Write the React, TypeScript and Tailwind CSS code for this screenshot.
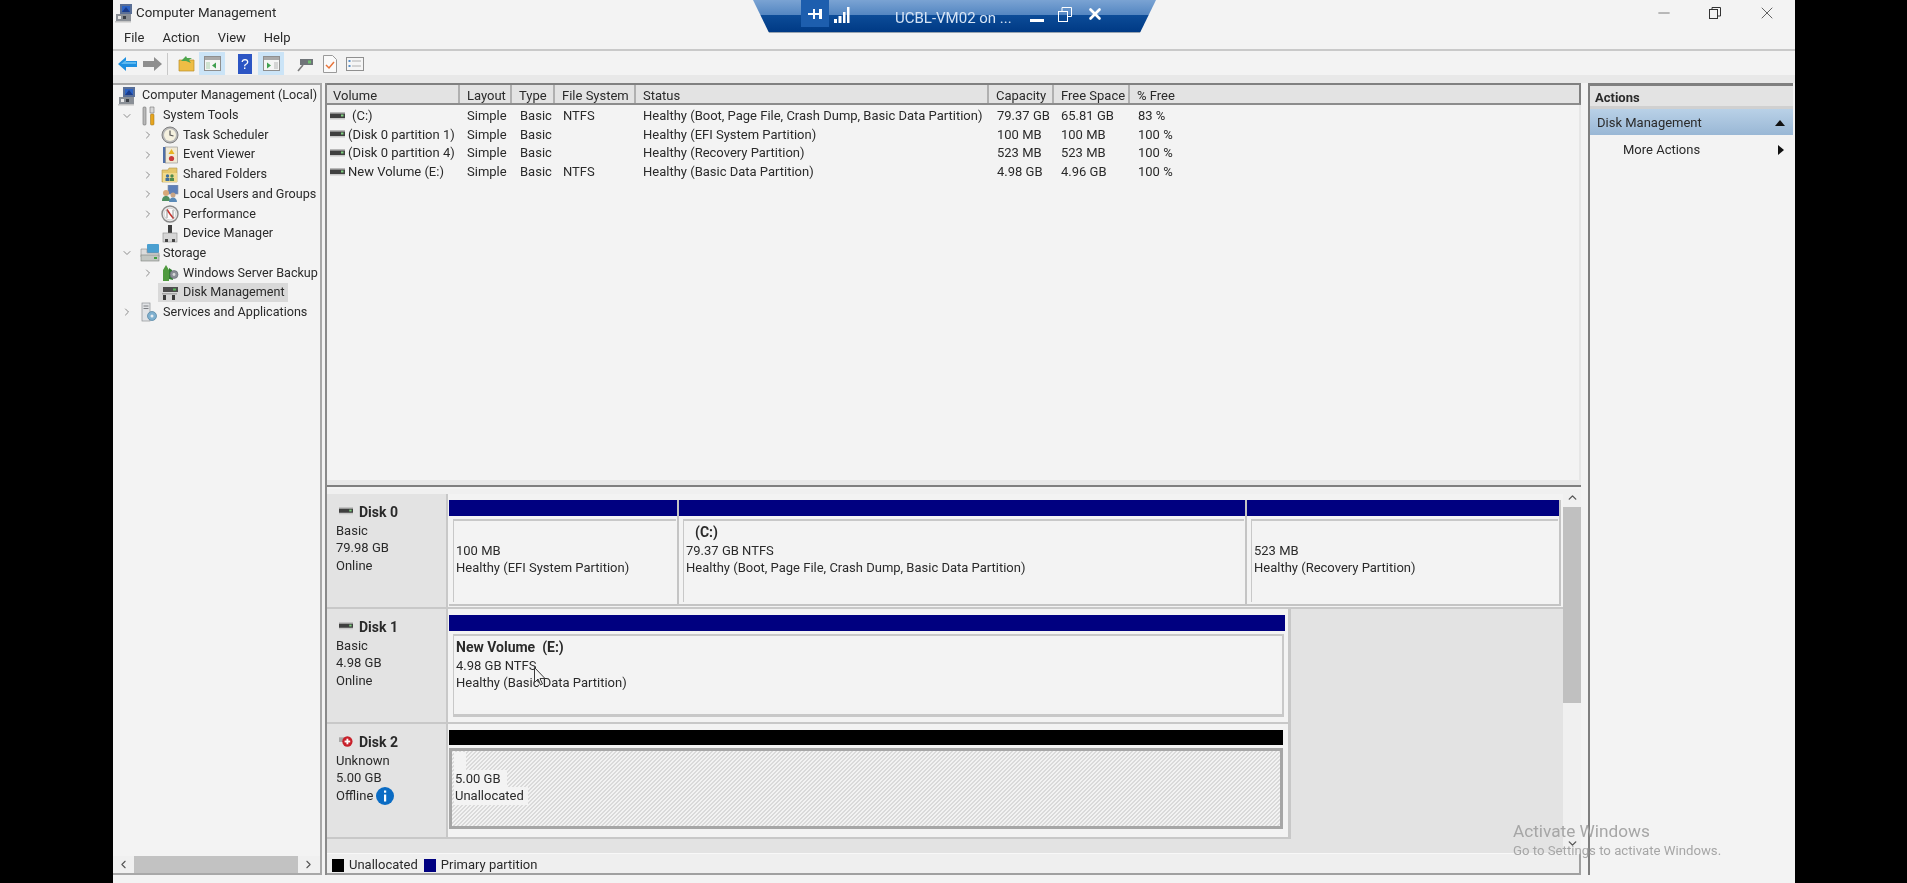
import { ChevronDown, ChevronRight, ChevronLeft, ChevronUp, Minus, X } from 'lucide-react';
import type { ReactNode } from 'react';

const columnGrid = 'grid grid-cols-[133px_52px_43px_81px_353px_65px_76px_1fr]';

const columns = ['Volume', 'Layout', 'Type', 'File System', 'Status', 'Capacity', 'Free Space', '% Free'];

const volumes = [
  { name: '(C:)', indent: true, fs: 'NTFS', status: 'Healthy (Boot, Page File, Crash Dump, Basic Data Partition)', cap: '79.37 GB', free: '65.81 GB', pct: '83 %' },
  { name: '(Disk 0 partition 1)', fs: '', status: 'Healthy (EFI System Partition)', cap: '100 MB', free: '100 MB', pct: '100 %' },
  { name: '(Disk 0 partition 4)', fs: '', status: 'Healthy (Recovery Partition)', cap: '523 MB', free: '523 MB', pct: '100 %' },
  { name: 'New Volume (E:)', fs: 'NTFS', status: 'Healthy (Basic Data Partition)', cap: '4.98 GB', free: '4.96 GB', pct: '100 %' },
];

function PcIcon() {
  return (
    <svg viewBox="0 0 18 20" className="w-[18px] h-[20px] shrink-0">
      <rect x="5" y="1" width="12" height="10" fill="#5a6f96" />
      <rect x="7" y="3" width="8" height="6" fill="#2b62c4" />
      <path d="M7 9l4-5 4 5z" fill="#1a3c8c" />
      <rect x="1" y="11" width="15" height="7" fill="#8a8f96" />
      <rect x="3" y="13" width="3" height="3" fill="#e8e8e8" />
      <rect x="8" y="13" width="3" height="3" fill="#3a3f46" />
      <rect x="0" y="18" width="16" height="1.5" fill="#c4c4c4" />
    </svg>
  );
}

function ToolsIcon() {
  return (
    <svg viewBox="0 0 18 20" className="w-[18px] h-[20px] shrink-0">
      <rect x="3" y="1" width="3" height="18" rx="1" fill="#b9b9b9" stroke="#6f6f6f" strokeWidth="0.6" />
      <path d="M10 1h4v6h-4z" fill="#d8d8d8" stroke="#777" strokeWidth="0.6" />
      <rect x="10.5" y="8" width="3.5" height="11" rx="1" fill="#e6a51f" stroke="#9a6c10" strokeWidth="0.5" />
    </svg>
  );
}

function ClockIcon() {
  return (
    <svg viewBox="0 0 18 18" className="w-[18px] h-[18px] shrink-0">
      <circle cx="9" cy="9" r="8" fill="#b8b8b8" stroke="#808080" />
      <circle cx="9" cy="9" r="6" fill="#f5f1df" />
      <path d="M9 4.5V9l3.5 1" stroke="#5a5a5a" strokeWidth="1.2" fill="none" />
    </svg>
  );
}

function ViewerIcon() {
  return (
    <svg viewBox="0 0 18 18" className="w-[18px] h-[18px] shrink-0">
      <rect x="2" y="1" width="3" height="16" fill="#4f6fa8" />
      <rect x="4.5" y="1" width="12" height="16" fill="#f0e9d4" stroke="#8a8a8a" strokeWidth="0.6" />
      <path d="M10.5 3l3 5h-6z" fill="#e7b321" />
      <circle cx="10.5" cy="12.5" r="2.6" fill="#c83a3a" />
    </svg>
  );
}

function FolderUsersIcon() {
  return (
    <svg viewBox="0 0 18 18" className="w-[18px] h-[18px] shrink-0">
      <path d="M1 4h6l1-2h8v14H1z" fill="#e4c66a" stroke="#b2954a" strokeWidth="0.6" />
      <rect x="2" y="7" width="14" height="9" fill="#f0da8e" />
      <circle cx="6.5" cy="10" r="1.7" fill="#3f6e9a" />
      <circle cx="11" cy="10" r="1.7" fill="#4f8a4f" />
      <rect x="4.5" y="12" width="4" height="3" fill="#3f6e9a" />
      <rect x="9" y="12" width="4" height="3" fill="#4f8a4f" />
    </svg>
  );
}

function UsersIcon() {
  return (
    <svg viewBox="0 0 18 18" className="w-[18px] h-[18px] shrink-0">
      <rect x="7" y="0" width="10" height="9" fill="#5d7fb8" stroke="#8c94a3" strokeWidth="0.6" />
      <circle cx="5" cy="8" r="3" fill="#d8a878" />
      <path d="M1 16c0-4 2-5 4-5s4 1 4 5z" fill="#4f8f5f" />
      <circle cx="12" cy="10" r="2.5" fill="#c9a585" />
      <path d="M8 17c0-3 2-4.500 4-4.500s4 1.500 4 4.500z" fill="#5a8ab8" />
    </svg>
  );
}

function PerfIcon() {
  return (
    <svg viewBox="0 0 18 18" className="w-[18px] h-[18px] shrink-0">
      <circle cx="9" cy="9" r="8" fill="#e8e8e8" stroke="#8a8a8a" strokeWidth="1.4" />
      <circle cx="9" cy="9" r="5.800" fill="#fbfbfb" stroke="#bdbdbd" strokeWidth="0.5" />
      <path d="M6 4.500L9 9l3.500 4.500" stroke="#c8322d" strokeWidth="1.6" fill="none" />
      <path d="M6 13V5M12 13V5" stroke="#7a7a7a" strokeWidth="0.8" />
    </svg>
  );
}

function DeviceIcon() {
  return (
    <svg viewBox="0 0 18 18" className="w-[18px] h-[18px] shrink-0">
      <rect x="7" y="0" width="4" height="8" fill="#3e3e3e" />
      <rect x="2" y="8" width="14" height="9" fill="#d6d6d6" stroke="#8a8a8a" strokeWidth="0.6" />
      <rect x="4" y="14" width="3" height="3" fill="#444" />
      <rect x="11" y="14" width="3" height="3" fill="#444" />
    </svg>
  );
}

function StorageIcon() {
  return (
    <svg viewBox="0 0 20 20" className="w-[20px] h-[20px] shrink-0">
      <rect x="7" y="1" width="12" height="9" rx="1" fill="#4a9fd0" />
      <path d="M1 6h6v4h12v4H1z" fill="#dcdcdc" stroke="#8a8a8a" strokeWidth="0.6" />
      <rect x="1" y="12" width="18" height="6" fill="#c2c6c2" stroke="#7c807c" strokeWidth="0.6" />
      <rect x="14" y="14" width="3" height="2" fill="#3f9f3f" />
    </svg>
  );
}

function BackupIcon() {
  return (
    <svg viewBox="0 0 18 18" className="w-[18px] h-[18px] shrink-0">
      <path d="M2 17V6l3-5 3 5v11z" fill="#4f9a3f" />
      <path d="M8 15V4l3 2 1 10z" fill="#2f7f2f" />
      <circle cx="13" cy="10.500" r="4" fill="#8a8e96" stroke="#60646a" strokeWidth="0.6" />
      <circle cx="13" cy="10.500" r="1.400" fill="#d9d9d9" />
    </svg>
  );
}

function DiskMgmtIcon() {
  return (
    <svg viewBox="0 0 18 18" className="w-[18px] h-[18px] shrink-0">
      <rect x="2" y="3" width="15" height="5" fill="#4c4c4c" />
      <rect x="12" y="4.500" width="3" height="2" fill="#55b455" />
      <rect x="1" y="9" width="15" height="1.500" fill="#a8a8a8" />
      <rect x="2" y="11" width="3" height="5" fill="#3c3c3c" />
      <rect x="11" y="11" width="3" height="5" fill="#3c3c3c" />
    </svg>
  );
}

function ServicesIcon() {
  return (
    <svg viewBox="0 0 18 20" className="w-[18px] h-[20px] shrink-0">
      <rect x="2" y="1" width="8" height="18" fill="#e1e3e6" stroke="#8f9296" strokeWidth="0.7" />
      <path d="M3.500 4h5M3.500 6.500h5" stroke="#6f7276" strokeWidth="0.9" />
      <circle cx="12" cy="14" r="4.500" fill="#7fb0cf" stroke="#4f7f9f" strokeWidth="0.7" />
      <circle cx="12" cy="14" r="1.500" fill="#e8eef2" />
    </svg>
  );
}

function DiskGlyph({ small }: { small?: boolean }) {
  return (
    <svg viewBox="0 0 15 8" className={small ? 'w-[15px] h-[8px] shrink-0' : 'w-[14px] h-[8px] shrink-0 -mt-[4px]'}>
      <rect x="0" y="0" width="15" height="1.500" fill="#b8b8b8" />
      <rect x="0" y="1.500" width="15" height="4.500" fill="#3f3f3f" />
      <rect x="11" y="2.500" width="2.500" height="2" fill="#7fd07f" />
      <rect x="0" y="6" width="15" height="1.500" fill="#c8c8c8" />
    </svg>
  );
}

type TreeNode = { label: string; level: 0 | 1 | 2; icon: ReactNode; chevron?: 'down' | 'right'; selected?: boolean };

const tree: TreeNode[] = [
  { label: 'Computer Management (Local)', level: 0, icon: <PcIcon /> },
  { label: 'System Tools', level: 1, icon: <ToolsIcon />, chevron: 'down' },
  { label: 'Task Scheduler', level: 2, icon: <ClockIcon />, chevron: 'right' },
  { label: 'Event Viewer', level: 2, icon: <ViewerIcon />, chevron: 'right' },
  { label: 'Shared Folders', level: 2, icon: <FolderUsersIcon />, chevron: 'right' },
  { label: 'Local Users and Groups', level: 2, icon: <UsersIcon />, chevron: 'right' },
  { label: 'Performance', level: 2, icon: <PerfIcon />, chevron: 'right' },
  { label: 'Device Manager', level: 2, icon: <DeviceIcon /> },
  { label: 'Storage', level: 1, icon: <StorageIcon />, chevron: 'down' },
  { label: 'Windows Server Backup', level: 2, icon: <BackupIcon />, chevron: 'right' },
  { label: 'Disk Management', level: 2, icon: <DiskMgmtIcon />, selected: true },
  { label: 'Services and Applications', level: 1, icon: <ServicesIcon />, chevron: 'right' },
];

function TreeRow({ node }: { node: TreeNode }) {
  const chevronClass = 'w-[12px] h-[12px] text-[#8c8c8c]';
  return (
    <div className="flex items-center h-[19.7px] whitespace-nowrap">
      {node.level === 0 && (
        <div className="flex items-center pl-[5px] gap-[6px]">
          {node.icon}
          <span>{node.label}</span>
        </div>
      )}
      {node.level === 1 && (
        <div className="flex items-center pl-[8px]">
          <span className="w-[12px] flex justify-center">
            {node.chevron === 'down' ? <ChevronDown className={chevronClass} /> : <ChevronRight className={chevronClass} />}
          </span>
          <span className="ml-[7px] w-[23px]">{node.icon}</span>
          <span>{node.label}</span>
        </div>
      )}
      {node.level === 2 && (
        <div className="flex items-center pl-[29px]">
          <span className="w-[12px] flex justify-center">
            {node.chevron && <ChevronRight className={chevronClass} />}
          </span>
          <div className={node.selected ? 'flex items-center ml-[4px] pl-[3px] pr-[3px] h-[19px] bg-[#d9d9d9]' : 'flex items-center ml-[4px] pl-[3px] pr-[3px] h-[19px]'}>
            <span className="w-[22px]">{node.icon}</span>
            <span>{node.label}</span>
          </div>
        </div>
      )}
    </div>
  );
}

function Toolbar() {
  return (
    <div className="flex items-center h-[24px] pt-[1px] pl-[5px]">
      <svg viewBox="0 0 19 16" className="w-[19px] h-[16px]">
        <path d="M0 8l8-7v4h11v6H8v4z" fill="#1e90e0" />
        <path d="M3 8l5-4v2h10v2z" fill="#5cb8f0" />
      </svg>
      <svg viewBox="0 0 19 16" className="w-[19px] h-[16px] ml-[6px]">
        <path d="M19 8l-8-7v4H0v6h11v4z" fill="#8e8e8e" />
      </svg>
      <div className="w-px h-[22px] bg-[#c8c8c8] ml-[5px]" />
      <svg viewBox="0 0 17 17" className="w-[17px] h-[17px] ml-[10px]">
        <path d="M1 5h15v11H1z" fill="#eebd45" stroke="#b98c25" strokeWidth="0.7" />
        <path d="M3 6l5-5 1 2 5 0-3 2 2 3-5-2z" fill="#4da64d" />
      </svg>
      <div className="flex items-center justify-center w-[26px] h-[23px] ml-[4px] bg-[#cbe4f7]">
        <svg viewBox="0 0 17 15" className="w-[17px] h-[15px]">
          <rect x="0.500" y="0.500" width="16" height="14" fill="#f5f5f5" stroke="#8f8f8f" />
          <rect x="1" y="1" width="15" height="3" fill="#a9a9a9" />
          <rect x="2" y="6" width="4" height="7" fill="#cfe3d0" />
          <path d="M12 6.500v6l-4-3z" fill="#3f9f4f" />
        </svg>
      </div>
      <svg viewBox="0 0 14 20" className="w-[14px] h-[20px] ml-[13px]">
        <rect width="14" height="20" fill="#2c55c4" />
        <text x="7" y="15" textAnchor="middle" fontSize="14" fill="#fff" fontFamily="Liberation Sans">?</text>
      </svg>
      <div className="flex items-center justify-center w-[26px] h-[23px] ml-[6px] bg-[#cbe4f7]">
        <svg viewBox="0 0 17 15" className="w-[17px] h-[15px]">
          <rect x="0.500" y="0.500" width="16" height="14" fill="#f5f5f5" stroke="#8f8f8f" />
          <rect x="1" y="1" width="15" height="3" fill="#a9a9a9" />
          <rect x="11" y="6" width="4" height="7" fill="#d5d5d5" />
          <path d="M4 6.500v6l4-3z" fill="#3f9f4f" />
        </svg>
      </div>
      <svg viewBox="0 0 17 16" className="w-[17px] h-[16px] ml-[13px]">
        <rect x="3" y="3" width="13" height="6" fill="#6f7478" />
        <rect x="11" y="4.500" width="3" height="3" fill="#6fbf6f" />
        <path d="M6 9l-5 6" stroke="#7a7a7a" strokeWidth="1.600" />
      </svg>
      <svg viewBox="0 0 14 18" className="w-[14px] h-[18px] ml-[9px]">
        <path d="M0.500 0.500h9l4 4v13H0.500z" fill="#fafafa" stroke="#9a9a9a" />
        <path d="M3 10l3 3 5-6" stroke="#e8743a" strokeWidth="1.500" fill="none" />
      </svg>
      <svg viewBox="0 0 18 14" className="w-[18px] h-[14px] ml-[9px]">
        <rect x="0.500" y="0.500" width="17" height="13" fill="#f5f5f5" stroke="#8f8f8f" />
        <rect x="2.500" y="3" width="2" height="2" fill="#5a8fc8" />
        <rect x="2.500" y="8" width="2" height="2" fill="#5a8fc8" />
        <path d="M6 4h9M6 9h9" stroke="#b0b0b0" />
      </svg>
    </div>
  );
}

function Partition({ width, name, lines, nameIndent }: { width: string; name?: string; lines: string[]; nameIndent?: boolean }) {
  return (
    <div className={`${width} shrink-0 pb-[2px] border-r-2 border-b-2 border-[#c4c4c4]`}>
      <div className="h-[16px] bg-[#000080]" />
      <div className="mt-[3px] ml-[4px] mr-[1px] h-[83px] pl-[1px] pt-[3px] border-t-2 border-l border-[#c8c8c8] leading-[17.500px]">
        <div className={nameIndent ? 'pl-[10px] font-bold text-[14px] h-[17.500px]' : 'pl-[1px] font-bold text-[14px] h-[17.500px]'}>{name}</div>
        {lines.map((l) => (
          <div key={l} className="pl-[1px]">{l}</div>
        ))}
      </div>
    </div>
  );
}

function DiskLabel({ name, icon, lines, extra }: { name: string; icon: ReactNode; lines: string[]; extra?: ReactNode }) {
  return (
    <div className="w-[121px] shrink-0 bg-[#e3e3e3] border-r-2 border-b-2 border-[#c8c8c8] pl-[9px] pt-[10px] leading-[17.500px]">
      <div className="flex items-center gap-[6px] ml-[3px] font-bold text-[14px]">
        {icon}
        <span>{name}</span>
      </div>
      {lines.map((l) => (
        <div key={l}>{l}</div>
      ))}
      {extra}
    </div>
  );
}

export default function App() {
  return (
    <div className="relative flex w-[1907px] h-[883px] bg-black overflow-hidden font-['Roboto','Open_Sans',sans-serif] text-[13px] text-[#2a2a2a] blur-[0.35px]">
      <div className="flex flex-col w-[1682px] h-full ml-[113px] bg-[#f3f3f3]">
        {/* title bar */}
        <div className="flex items-center h-[26px] shrink-0 pl-[2px]">
          <PcIcon />
          <span className="ml-[3px] text-[13.300px]">Computer Management</span>
          <div className="ml-auto flex items-center mr-[18px] gap-[36px]">
            <Minus className="w-[18px] h-[18px] text-[#555]" strokeWidth={1} />
            <svg viewBox="0 0 12 12" className="w-[12px] h-[12px]">
              <rect x="0.500" y="2.500" width="8" height="9" fill="none" stroke="#333" />
              <path d="M3 2.500V0.500h8.500v8.500H8.500" fill="none" stroke="#333" />
            </svg>
            <X className="w-[20px] h-[20px] text-[#444]" strokeWidth={1} />
          </div>
        </div>
        {/* menu bar */}
        <div className="flex items-center h-[25px] shrink-0 pl-[11px] gap-[18px] border-b-2 border-[#c9c9c9]">
          <span>File</span>
          <span>Action</span>
          <span>View</span>
          <span>Help</span>
        </div>
        <Toolbar />
        <div className="h-[8px] shrink-0 bg-[#e8e8e8]" />

        {/* panes */}
        <div className="flex h-[792px] shrink-0">
          {/* tree */}
          <div className="flex flex-col w-[209px] shrink-0 border-t-2 border-r-2 border-b-2 border-[#a8a8a8] text-[12.600px]">
            <div className="flex-1 pt-[1px] overflow-hidden">
              {tree.map((n) => (
                <TreeRow key={n.label} node={n} />
              ))}
            </div>
            <div className="flex items-center h-[17px] bg-[#f0f0f0] shrink-0">
              <ChevronLeft className="w-[13px] h-[13px] ml-[4px] text-[#555]" />
              <div className="ml-[4px] w-[164px] h-full bg-[#c2c2c2]" />
              <ChevronRight className="w-[13px] h-[13px] ml-[4px] text-[#555]" />
            </div>
          </div>

          <div className="w-[3px] shrink-0" />

          {/* volume list + graphical view */}
          <div className="flex flex-col w-[1256px] shrink-0 border-l-2 border-[#8a8a8a]">
            <div className="flex flex-col h-[404px] shrink-0 border-t-2 border-b-2 border-t-[#808080] border-b-[#808080]">
              <div className={`${columnGrid} h-[20px] shrink-0 bg-[#e3e3e3] border-b-2 border-r-2 border-b-[#8c8c8c] border-r-[#808080]`}>
                {columns.map((c) => (
                  <div key={c} className="flex items-center pl-[7px] pt-[3px] border-r-2 border-[#b0b0b0] whitespace-nowrap overflow-hidden first:pl-[6px] last:border-r-0">
                    {c}
                  </div>
                ))}
              </div>
              <div className="flex-1 pt-[1px] border-r-2 border-[#e6e6e6]">
                {volumes.map((v) => (
                  <div key={v.name} className={`${columnGrid} h-[18.600px] items-center whitespace-nowrap`}>
                    <div className="flex items-center pl-[3px]">
                      <DiskGlyph small />
                      <span className={v.indent ? 'ml-[7px]' : 'ml-[3px]'}>{v.name}</span>
                    </div>
                    <div className="pl-[7px]">Simple</div>
                    <div className="pl-[8px]">Basic</div>
                    <div className="pl-[8px]">{v.fs}</div>
                    <div className="pl-[7px]">{v.status}</div>
                    <div className="pl-[8px]">{v.cap}</div>
                    <div className="pl-[7px]">{v.free}</div>
                    <div className="pl-[8px]">{v.pct}</div>
                  </div>
                ))}
              </div>
              <div className="h-[5px] shrink-0 bg-[#e8e8e8]" />
            </div>

            <div className="flex h-[364px] shrink-0 mt-[2px]">
              <div className="flex flex-col w-[1236px] shrink-0 bg-[#e3e3e3]">
                <div className="h-[5px] shrink-0 bg-[#f0f0f0]" />
                {/* Disk 0 */}
                <div className="flex h-[115px] shrink-0 bg-[#f3f3f3]">
                  <DiskLabel
                    name="Disk 0"
                    icon={<DiskGlyph />}
                    lines={['Basic', '79.98 GB', 'Online']}
                  />
                  <div className="flex flex-1 pt-[6px] pl-[1px] items-start border-b-2 border-[#c8c8c8]">
                    <Partition width="w-[230px]" lines={['100 MB', 'Healthy (EFI System Partition)']} />
                    <Partition width="w-[568px]" name="(C:)" nameIndent lines={['79.37 GB NTFS', 'Healthy (Boot, Page File, Crash Dump, Basic Data Partition)']} />
                    <Partition width="w-[314px]" lines={['523 MB', 'Healthy (Recovery Partition)']} />
                  </div>
                </div>
                {/* Disk 1 */}
                <div className="flex h-[115px] shrink-0">
                  <DiskLabel
                    name="Disk 1"
                    icon={<DiskGlyph />}
                    lines={['Basic', '4.98 GB', 'Online']}
                  />
                  <div className="w-[843px] shrink-0 pt-[6px] pl-[1px] pr-[3px] bg-[#f3f3f3] border-r-[3px] border-b-2 border-[#c8c8c8]">
                    <div className="h-[16px] bg-[#000080]" />
                    <div className="mt-[3px] ml-[4px] mr-[1px] h-[83px] pl-[1px] pt-[3px] border-t-2 border-l border-r-2 border-b-[3px] border-[#c8c8c8] leading-[17.500px]">
                      <div className="pl-[1px] font-bold text-[14px] h-[17.500px]">New Volume&nbsp; (E:)</div>
                      <div className="pl-[1px]">4.98 GB NTFS</div>
                      <div className="pl-[1px]">Healthy (Basic Data Partition)</div>
                    </div>
                  </div>
                </div>
                {/* Disk 2 */}
                <div className="flex h-[115px] shrink-0">
                  <DiskLabel
                    name="Disk 2"
                    icon={
                      <svg viewBox="0 0 15 13" className="w-[14px] h-[13px] shrink-0 -mt-[2px]">
                        <rect x="0" y="2" width="9" height="5" fill="#a8a8a8" />
                        <circle cx="9" cy="6.500" r="5.500" fill="#c8202a" />
                        <rect x="6" y="5.500" width="6" height="2" fill="#fff" />
                        <rect x="8" y="3.500" width="2" height="6" fill="#fff" />
                      </svg>
                    }
                    lines={['Unknown', '5.00 GB']}
                    extra={
                      <div className="flex items-center gap-[3px]">
                        <span>Offline</span>
                        <svg viewBox="0 0 18 18" className="w-[18px] h-[18px]">
                          <circle cx="9" cy="9" r="9" fill="#0b6cc4" />
                          <rect x="8" y="7.500" width="2.200" height="7" fill="#fff" />
                          <rect x="8" y="3.500" width="2.200" height="2.200" fill="#fff" />
                        </svg>
                      </div>
                    }
                  />
                  <div className="w-[843px] shrink-0 pt-[6px] pl-[1px] pr-[5px] bg-[#f3f3f3] border-r-[3px] border-b-2 border-[#c8c8c8]">
                    <div className="h-[15px] bg-black" />
                    <div className="mt-[3px] h-[81px] border-[3px] border-[#a6a6a6] pt-[1px] pl-[2px] leading-[17.500px] bg-[repeating-linear-gradient(135deg,#dadada_0,#dadada_1px,#f3f3f3_1px,#f3f3f3_2.828px)]">
                      <div className="w-[12px] h-[17.500px] bg-[#f3f3f3]" />
                      <div className="pl-[1px] pr-[6px] w-fit bg-[#f3f3f3]">5.00 GB</div>
                      <div className="pl-[1px] pr-[4px] w-fit bg-[#f3f3f3]">Unallocated</div>
                    </div>
                  </div>
                </div>
              </div>
              {/* vertical scrollbar */}
              <div className="flex flex-col items-center w-[18px] shrink-0 bg-[#f0f0f0]">
                <ChevronUp className="w-[13px] h-[13px] mt-[2px] text-[#555]" strokeWidth={2.500} />
                <div className="mt-[3px] w-full h-[196px] bg-[#c0c0c0]" />
                <ChevronDown className="w-[13px] h-[13px] mt-auto mb-[3px] text-[#555]" strokeWidth={2.500} />
              </div>
            </div>

            {/* legend */}
            <div className="flex items-center h-[22px] shrink-0 pl-[5px] pt-[3px] bg-[#efefef] border-t border-[#f8f8f8] border-b-2 border-b-[#a0a0a0] border-r-2 border-r-[#a0a0a0]">
              <div className="w-[12px] h-[13px] bg-black" />
              <span className="ml-[5px]">Unallocated</span>
              <div className="w-[12px] h-[13px] ml-[6px] bg-[#000080]" />
              <span className="ml-[5px]">Primary partition</span>
            </div>
          </div>

          <div className="w-[7px] shrink-0" />

          {/* actions */}
          <div className="w-[205px] shrink-0 border-t-[3px] border-l-2 border-[#7f7f7f]">
            <div className="flex items-center h-[20px] pl-[5px] pt-[3px] bg-[#e3e3e3] font-bold">Actions</div>
            <div className="h-[3px] bg-[#d0d0d0]" />
            <div className="flex items-center justify-between h-[26px] pl-[7px] pr-[8px] pt-[2px] bg-[linear-gradient(#b9d1e7,#99b7d5)]">
              <span>Disk Management</span>
              <svg viewBox="0 0 10 6" className="w-[10px] h-[6px]"><path d="M0 6l5-6 5 6z" fill="#111" /></svg>
            </div>
            <div className="flex items-center justify-between h-[28px] pl-[33px] pr-[9px] pt-[2px]">
              <span>More Actions</span>
              <svg viewBox="0 0 6 10" className="w-[6px] h-[10px]"><path d="M0 0l6 5-6 5z" fill="#111" /></svg>
            </div>
          </div>
        </div>
      </div>

      {/* remote session connection bar */}
      <div className="absolute left-[753px] top-0 flex items-start w-[403px] h-[33px] bg-[linear-gradient(#7aa3d3_0,#5587c2_44%,#0c4c98_46%,#003a85_96%,#9aa4b0_96%)] [clip-path:polygon(0_0,100%_0,96%_100%,4%_100%)] text-white">
        <div className="flex items-center justify-center w-[28px] h-[27px] ml-[48px] bg-[#1d5eae]">
          <svg viewBox="0 0 14 12" className="w-[16px] h-[12px]">
            <path d="M0 5h5V1h2v4h4V1h3v10h-3V7H7v4H5V7H0z" fill="#fff" />
          </svg>
        </div>
        <svg viewBox="0 0 16 16" className="w-[16px] h-[16px] mt-[7px] ml-[5px]">
          <path d="M0 12h3v4H0zM4.500 9h3v7h-3zM9 5h2.500v11H9zM13 0h2.500v16H13z" fill="#fff" />
        </svg>
        <span className="ml-[45px] mt-[7px] w-[120px] text-[15px] text-[#d6e4f5] whitespace-nowrap">UCBL-VM02 on ...</span>
        <div className="ml-[15px] mt-[19px] w-[14px] h-[3px] bg-white" />
        <svg viewBox="0 0 14 15" className="w-[14px] h-[15px] ml-[14px] mt-[7px]">
          <rect x="0.500" y="4.500" width="9" height="10" fill="none" stroke="#fff" />
          <path d="M4 4.500V0.500h9.500v9H9.500" fill="none" stroke="#fff" />
        </svg>
        <X className="w-[18px] h-[18px] ml-[14px] mt-[5px] text-white" strokeWidth={3.500} />
      </div>

      {/* Windows activation watermark */}
      <div className="absolute left-[1513px] top-[819px] text-[#a6a6a6] whitespace-nowrap pointer-events-none">
        <div className="text-[17.200px] leading-[24px]">Activate Windows</div>
        <div className="text-[13.200px] leading-[19px] -mt-[2px]">Go to Settings to activate Windows.</div>
      </div>

      {/* mouse pointer */}
      <svg viewBox="0 0 12 19" className="absolute left-[534px] top-[667px] w-[12px] h-[19px]">
        <path d="M0.500 0.500v15l3.500-3.500 2.500 6 2-1-2.500-5.500h5z" fill="#f5f5f5" stroke="#3a3a3a" />
      </svg>
    </div>
  );
}
